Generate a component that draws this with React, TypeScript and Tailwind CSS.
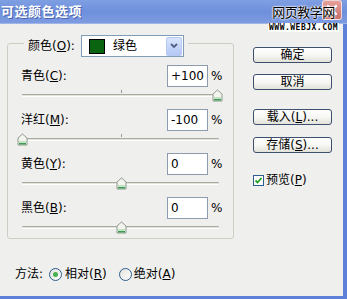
import React from "react";

const FONT = "font-['Tahoma','DejaVu_Sans','Noto_Sans_CJK_SC',sans-serif]";

function Thumb({ left }: { left: string }) {
  return (
    <svg
      width="11"
      height="13"
      viewBox="0 0 11 13"
      className={`absolute top-0 ${left}`}
    >
      <path d="M1 5 L5.5 1 L10 5 V12 H1 Z" fill="#f4f4ee" stroke="#8c9a8c" strokeWidth="1" />
      <path d="M2 10 H9 V11.5 H2 Z" fill="#3f9a52" />
      <path d="M2 9 H9" stroke="#8fd19b" strokeWidth="1" />
    </svg>
  );
}

function Slider({ pos }: { pos: string }) {
  return (
    <div className="relative h-[13px] mt-[2px] mx-[14px]">
      <div className="absolute left-0 right-0 top-[5px] h-[3px] border-t border-[#a9a9a0] border-b border-b-white bg-[#e4e4dc] rounded-[1px]" />
      <div className="absolute left-1/2 top-[1px] w-px h-[3px] bg-[#999]" />
      <Thumb left={pos} />
    </div>
  );
}

function ValueRow({ label, hot, rest, value }: { label: string; hot: string; rest: string; value: string }) {
  return (
    <div className="flex items-center h-[22px] pl-[13px]">
      <span className="flex-1 text-[12px] text-black">
        {label}(<span className="underline">{hot}</span>){rest}
      </span>
      <div className="w-[41px] h-[22px] bg-white border border-[#8c9bad] px-[3px] flex items-center text-[12px] text-black">
        {value}
      </div>
      <span className="w-[25px] pl-[3px] text-[12px] text-black">%</span>
    </div>
  );
}

function XpButton({ children }: { children: React.ReactNode }) {
  return (
    <button className="w-[79px] h-[16px] rounded-[3px] border border-[#3c4f6e] bg-gradient-to-b from-white via-[#f7f7f4] to-[#e2e2da] text-[12px] leading-none text-black flex items-center justify-center">
      {children}
    </button>
  );
}

export default function App() {
  return (
    <div className={`relative w-[347px] h-[299px] flex flex-col overflow-hidden ${FONT}`}>
      {/* title bar */}
      <div className="h-[24px] bg-gradient-to-b from-[#7f9fe3] via-[#6e8fdc] to-[#7d9be0] flex items-center pl-[1px] border-b border-[#9fb5e8]">
        <span className="text-white font-bold text-[13px] tracking-[0.5px] [text-shadow:1px_1px_0_#4a66b0]">
          可选颜色选项
        </span>
        <div className="ml-auto mr-[5px] mb-[3px] w-[20px] h-[20px] rounded-[3px] bg-gradient-to-b from-[#e7a09c] to-[#c96f6a] border border-white/70 flex items-center justify-center">
          <svg width="12" height="12" viewBox="0 0 12 12">
            <path d="M2 2 L10 10 M10 2 L2 10" stroke="white" strokeWidth="2.4" strokeLinecap="round" />
          </svg>
        </div>
      </div>

      {/* watermark */}
      <div className="absolute top-[6px] left-[268px] flex flex-col items-center">
        <span className="text-[13px] leading-[14px] text-black tracking-[-0.5px] [text-shadow:0_0_2px_white,0_0_2px_white,0_0_2px_white]">
          网页教学网
        </span>
        <span className="mt-[3px] bg-white px-[1px] text-[8px] leading-[9px] font-bold tracking-[0.5px] text-black font-['DejaVu_Sans_Mono',monospace]">
          WWW.WEBJX.COM
        </span>
      </div>

      {/* body */}
      <div className="flex-1 bg-[#efefed] border-r-4 border-b-[3px] border-[#5f80d8] flex">
        <div className="flex flex-col w-[250px]">
          {/* group box */}
          <div className="ml-[7px] mt-[19px] w-[227px] h-[196px] border border-[#cdcdc3] rounded-[3px] flex flex-col">
            <div className="-mt-[9px] ml-[16px] flex items-center self-start bg-[#efefed] px-[4px] gap-[6px]">
              <span className="text-[12px] text-black">
                颜色(<span className="underline">O</span>):
              </span>
              <div className="w-[103px] h-[22px] bg-white border border-[#7f9db9] flex items-center pl-[7px]">
                <div className="w-[16px] h-[15px] bg-[#0b6410] border border-black" />
                <span className="ml-[8px] text-[12px] text-black flex-1">绿色</span>
                <div className="w-[16px] h-[19px] mr-px rounded-[2px] bg-gradient-to-b from-[#d9e5fd] to-[#b4c8f6] border border-[#b7c9f3] flex items-center justify-center">
                  <svg width="8" height="6" viewBox="0 0 8 6">
                    <path d="M1 1 L4 4 L7 1" stroke="#4d6185" strokeWidth="1.8" fill="none" />
                  </svg>
                </div>
              </div>
            </div>

            <div className="mt-[8px] flex flex-col">
              <ValueRow label="青色" hot="C" rest=":" value="+100" />
              <Slider pos="right-[-4px]" />
              <div className="h-[7px]" />
              <ValueRow label="洋红" hot="M" rest=":" value="-100" />
              <Slider pos="left-[-5px]" />
              <div className="h-[7px]" />
              <ValueRow label="黄色" hot="Y" rest=":" value="0" />
              <Slider pos="left-[94px]" />
              <div className="h-[7px]" />
              <ValueRow label="黑色" hot="B" rest=":" value="0" />
              <Slider pos="left-[94px]" />
            </div>
          </div>

          {/* method */}
          <div className="ml-[15px] mt-[26px] flex items-center text-[12px] text-black">
            <span>方法:</span>
            <div className="ml-[6px] w-[13px] h-[13px] rounded-full border border-[#2c5d8d] bg-gradient-to-br from-[#e2e2dc] to-white flex items-center justify-center">
              <div className="w-[5px] h-[5px] rounded-full bg-[#45b04f]" />
            </div>
            <span className="ml-[3px]">
              相对(<span className="underline">R</span>)
            </span>
            <div className="ml-[12px] w-[13px] h-[13px] rounded-full border border-[#2c5d8d] bg-gradient-to-br from-[#e2e2dc] to-white" />
            <span className="ml-[2px]">
              绝对(<span className="underline">A</span>)
            </span>
          </div>
        </div>

        {/* buttons */}
        <div className="ml-[3px] mt-[23px] flex flex-col">
          <XpButton>确定</XpButton>
          <div className="h-[11px]" />
          <XpButton>取消</XpButton>
          <div className="h-[19px]" />
          <XpButton>
            载入(<span className="underline">L</span>)...
          </XpButton>
          <div className="h-[12px]" />
          <XpButton>
            存储(<span className="underline">S</span>)...
          </XpButton>
          <div className="mt-[18px] flex items-center">
            <div className="w-[11px] h-[11px] border border-[#2c5d8d] bg-white flex items-center justify-center">
              <svg width="9" height="9" viewBox="0 0 9 9">
                <path d="M1.5 4.5 L3.5 6.5 L7.5 2" stroke="#21a121" strokeWidth="1.8" fill="none" />
              </svg>
            </div>
            <span className="ml-[2px] text-[12px] text-black">
              预览(<span className="underline">P</span>)
            </span>
          </div>
        </div>
      </div>
    </div>
  );
}
